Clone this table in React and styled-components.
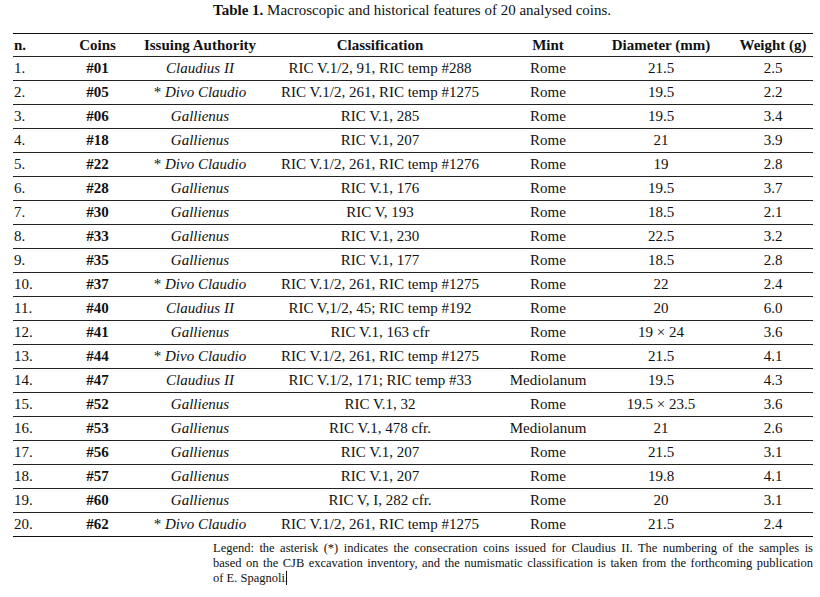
import React from "react";
import styled, { createGlobalStyle } from "styled-components";

const GlobalStyle = createGlobalStyle`
  html, body {
    margin: 0;
    padding: 0;
    background: #fff;
  }
  body {
    font-family: "Liberation Serif", "Times New Roman", serif;
    color: #111;
  }
`;

const rows = [
  ["1.", "#01", "Claudius II", "RIC V.1/2, 91, RIC temp #288", "Rome", "21.5", "2.5"],
  ["2.", "#05", "* Divo Claudio", "RIC V.1/2, 261, RIC temp #1275", "Rome", "19.5", "2.2"],
  ["3.", "#06", "Gallienus", "RIC V.1, 285", "Rome", "19.5", "3.4"],
  ["4.", "#18", "Gallienus", "RIC V.1, 207", "Rome", "21", "3.9"],
  ["5.", "#22", "* Divo Claudio", "RIC V.1/2, 261, RIC temp #1276", "Rome", "19", "2.8"],
  ["6.", "#28", "Gallienus", "RIC V.1, 176", "Rome", "19.5", "3.7"],
  ["7.", "#30", "Gallienus", "RIC V, 193", "Rome", "18.5", "2.1"],
  ["8.", "#33", "Gallienus", "RIC V.1, 230", "Rome", "22.5", "3.2"],
  ["9.", "#35", "Gallienus", "RIC V.1, 177", "Rome", "18.5", "2.8"],
  ["10.", "#37", "* Divo Claudio", "RIC V.1/2, 261, RIC temp #1275", "Rome", "22", "2.4"],
  ["11.", "#40", "Claudius II", "RIC V,1/2, 45; RIC temp #192", "Rome", "20", "6.0"],
  ["12.", "#41", "Gallienus", "RIC V.1, 163 cfr", "Rome", "19 × 24", "3.6"],
  ["13.", "#44", "* Divo Claudio", "RIC V.1/2, 261, RIC temp #1275", "Rome", "21.5", "4.1"],
  ["14.", "#47", "Claudius II", "RIC V.1/2, 171; RIC temp #33", "Mediolanum", "19.5", "4.3"],
  ["15.", "#52", "Gallienus", "RIC V.1, 32", "Rome", "19.5 × 23.5", "3.6"],
  ["16.", "#53", "Gallienus", "RIC V.1, 478 cfr.", "Mediolanum", "21", "2.6"],
  ["17.", "#56", "Gallienus", "RIC V.1, 207", "Rome", "21.5", "3.1"],
  ["18.", "#57", "Gallienus", "RIC V.1, 207", "Rome", "19.8", "4.1"],
  ["19.", "#60", "Gallienus", "RIC V, I, 282 cfr.", "Rome", "20", "3.1"],
  ["20.", "#62", "* Divo Claudio", "RIC V.1/2, 261, RIC temp #1275", "Rome", "21.5", "2.4"],
];

const headers = ["n.", "Coins", "Issuing Authority", "Classification", "Mint", "Diameter (mm)", "Weight (g)"];

const legendLines = [
  "Legend: the asterisk (*) indicates the consecration coins issued for Claudius II. The numbering of the samples is",
  "based on the CJB excavation inventory, and the numismatic classification is taken from the forthcoming publication",
];

const Page = styled.div`
  width: 820px;
  height: 597px;
  padding-top: 2px;
  box-sizing: border-box;
`;

const Caption = styled.div`
  padding-left: 213px;
  font-size: 15px;
  line-height: 17px;
  height: 31px;
  b {
    font-weight: bold;
  }
`;

const Table = styled.div`
  margin-left: 13px;
  width: 800px;
  border-top: 1.5px solid #111;
  border-bottom: 1.5px solid #111;
`;

const Row = styled.div`
  display: grid;
  grid-template-columns: 47px 75px 130px 230px 106px 120px 92px;
  height: ${(p) => (p.$head ? "22px" : "23px")};
  align-items: center;
  border-top: ${(p) => (p.$first ? "none" : "1px solid #222")};
  font-size: 15px;
  font-weight: ${(p) => (p.$head ? "bold" : "normal")};
`;

const Cell = styled.div`
  text-align: ${(p) => (p.$left ? "left" : "center")};
  padding-left: ${(p) => p.$pad || 0}px;
  font-style: ${(p) => (p.$italic ? "italic" : "normal")};
  font-weight: ${(p) => (p.$bold ? "bold" : "inherit")};
  white-space: nowrap;
`;

const Legend = styled.div`
  margin: 4px 0 0 213px;
  width: 600px;
  font-size: 12.5px;
  line-height: 15px;
`;

const LegendLine = styled.div`
  white-space: nowrap;
  text-align: ${(p) => (p.$last ? "left" : "justify")};
  text-align-last: ${(p) => (p.$last ? "left" : "justify")};
`;

const Caret = styled.span`
  display: inline-block;
  width: 1px;
  height: 14px;
  background: #111;
  vertical-align: -3px;
  margin-left: -2px;
`;

const colProps = (i) => ({
  $left: i === 0,
  $pad: i === 0 ? 1 : i === 6 ? 12 : 0,
});

export default function App() {
  return (
    <Page>
      <GlobalStyle />
      <Caption>
        <b>Table 1.</b> Macroscopic and historical features of 20 analysed coins.
      </Caption>
      <Table>
        <Row $head $first>
          {headers.map((h, i) => (
            <Cell key={h} {...colProps(i)}>
              {h}
            </Cell>
          ))}
        </Row>
        {rows.map((r) => (
          <Row key={r[0]}>
            {r.map((v, i) => (
              <Cell key={i} {...colProps(i)} $italic={i === 2} $bold={i === 1}>
                {i === 2 && v.startsWith("* ") ? (
                  <>
                    <span style={{ fontStyle: "normal" }}>*</span> {v.slice(2)}
                  </>
                ) : (
                  v
                )}
              </Cell>
            ))}
          </Row>
        ))}
      </Table>
      <Legend>
        {legendLines.map((l) => (
          <LegendLine key={l}>{l}</LegendLine>
        ))}
        <LegendLine $last>
          of E. Spagnoli.
          <Caret />
        </LegendLine>
      </Legend>
    </Page>
  );
}
